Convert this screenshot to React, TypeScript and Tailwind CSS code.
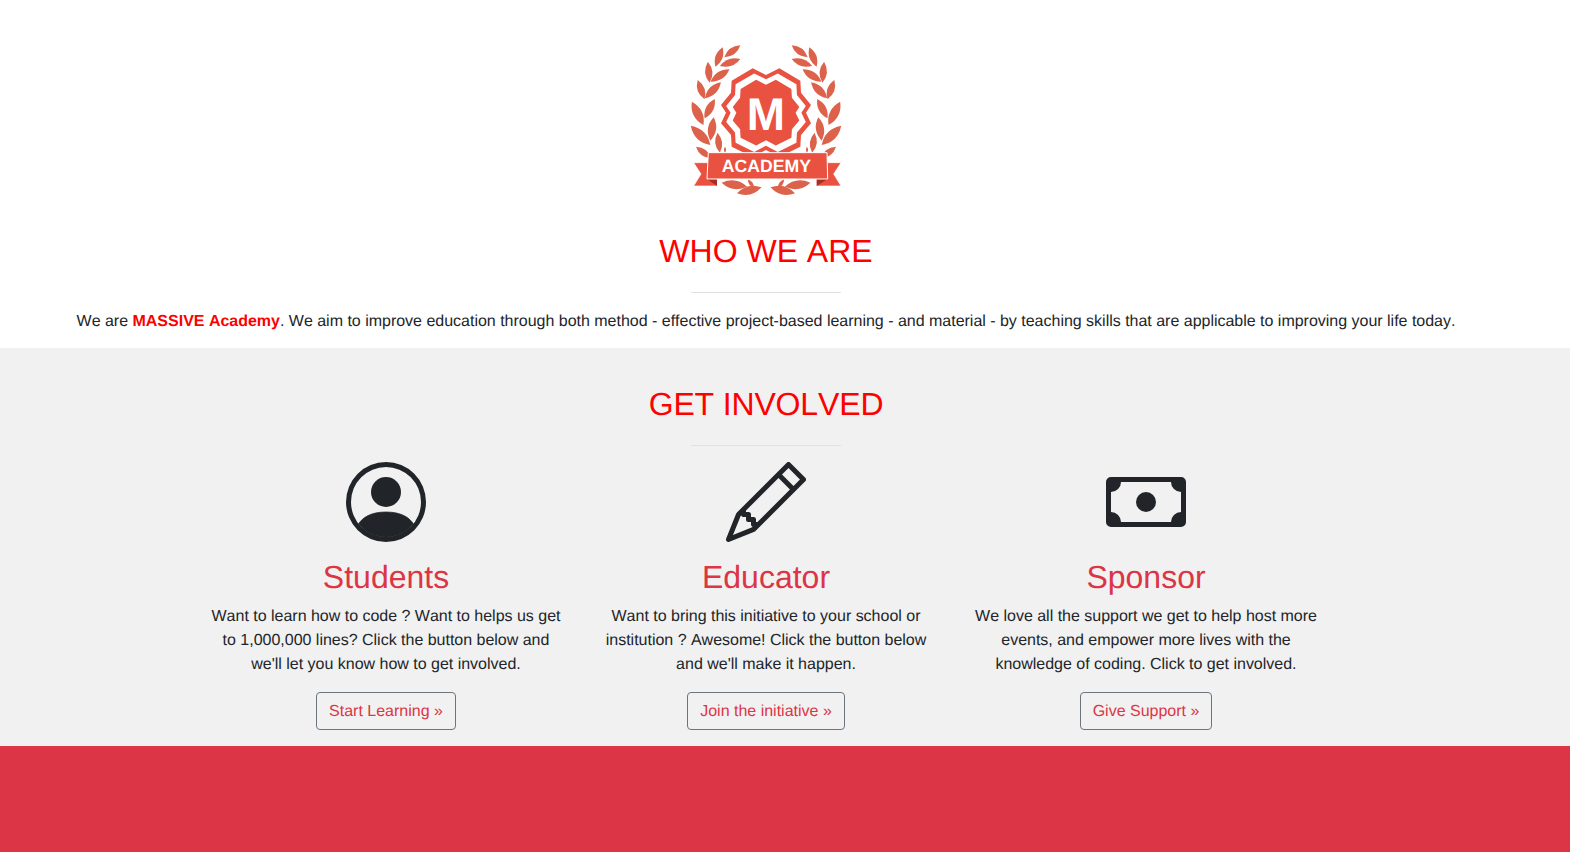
import React from "react";

const leaves = [
  [210, 46, 163, 82], [158, 52, 137, 110], [210, 87, 150, 108],
  [115, 95, 120, 158], [178, 118, 123, 155], [85, 150, 105, 208],
  [153, 157, 106, 205], [68, 215, 102, 285], [135, 207, 105, 265],
  [65, 287, 122, 345], [132, 262, 122, 332], [80, 350, 125, 385],
  [143, 308, 150, 368], [165, 350, 165, 368],
  [155, 458, 230, 470], [200, 490, 272, 472], [232, 448, 250, 474],
];

function leafPath([x1, y1, x2, y2]: number[]) {
  const mx = (x1 + x2) / 2;
  const my = (y1 + y2) / 2;
  const dx = (y2 - y1) * 0.34;
  const dy = (x1 - x2) * 0.34;
  return `M${x1} ${y1}Q${mx + dx} ${my + dy} ${x2} ${y2}Q${mx - dx} ${my - dy} ${x1} ${y1}Z`;
}

const badge =
  "M285 135L245 115L182 152L180 188L150 225L165 248L150 280L180 315L182 350L245 381L285 360L325 381L388 350L390 315L420 280L405 248L420 225L390 188L388 152L325 115Z";

function Logo() {
  return (
    <svg viewBox="0 0 570 540" className="block w-[190px] h-[180px]">
      <g fill="#dc624b" transform="translate(285 0) scale(1.025 1) translate(-285 0)">
        {leaves.map((l, i) => (
          <path key={i} d={leafPath(l)} />
        ))}
        <g transform="matrix(-1 0 0 1 570 0)">
          {leaves.map((l, i) => (
            <path key={i} d={leafPath(l)} />
          ))}
        </g>
      </g>
      <path d={badge} fill="#e95140" />
      <path d={badge} fill="#ffffff" transform="translate(285 248) scale(.885) translate(-285 -248)" />
      <path d={badge} fill="#e95140" transform="translate(285 248) scale(.74) translate(-285 -248)" />
      <text x="285" y="299" textAnchor="middle" fill="#fff" fontSize="138" fontWeight="700" fontFamily="'Liberation Sans', sans-serif">
        M
      </text>
      <path d="M68 398H138V468H68L90 432Z" fill="#e95140" stroke="#fff" strokeWidth="2" />
      <path d="M510 398H437V468H510L488 432Z" fill="#e95140" stroke="#fff" strokeWidth="2" />
      <path d="M108 447H138V468Z" fill="#a92e22" />
      <path d="M470 447H437V468Z" fill="#a92e22" />
      <path d="M112 368L468 368L470 447L108 447Z" fill="#e95140" stroke="#fff" strokeWidth="3" />
      <text x="286" y="425" textAnchor="middle" fill="#fff" fontSize="53" fontWeight="700" fontFamily="'Liberation Sans', sans-serif">
        ACADEMY
      </text>
    </svg>
  );
}

function PersonIcon() {
  return (
    <svg viewBox="0 0 16 16" fill="#212529" className="block w-20 h-20">
      <path stroke="#212529" strokeWidth=".15" d="M13.468 12.37C12.758 11.226 11.195 10 8 10s-4.757 1.225-5.468 2.37A6.987 6.987 0 0 0 8 15a6.987 6.987 0 0 0 5.468-2.63z" />
      <path fillRule="evenodd" d="M8 9a3 3 0 1 0 0-6 3 3 0 0 0 0 6z" />
      <path fillRule="evenodd" d="M8 1a7 7 0 1 0 0 14A7 7 0 0 0 8 1zM0 8a8 8 0 1 1 16 0A8 8 0 0 1 0 8z" />
    </svg>
  );
}

function PencilIcon() {
  return (
    <svg viewBox="0 0 16 16" fill="#212529" className="block w-20 h-20">
      <path d="M12.146.146a.5.5 0 0 1 .708 0l3 3a.5.5 0 0 1 0 .708l-10 10a.5.5 0 0 1-.168.11l-5 2a.5.5 0 0 1-.65-.65l2-5a.5.5 0 0 1 .11-.168l10-10zM11.207 2.5 13.5 4.793 14.793 3.5 12.5 1.207 11.207 2.5zm1.586 3L10.5 3.207 4 9.707V10h.5a.5.5 0 0 1 .5.5v.5h.5a.5.5 0 0 1 .5.5v.5h.293l6.5-6.5zm-9.761 5.175-.106.106-1.528 3.821 3.821-1.528.106-.106A.5.5 0 0 1 5 12.5V12h-.5a.5.5 0 0 1-.5-.5V11h-.5a.5.5 0 0 1-.468-.325z" />
    </svg>
  );
}

function CashIcon() {
  return (
    <svg viewBox="0 0 16 16" fill="#212529" className="block w-20 h-20">
      <path d="M8 10a2 2 0 1 0 0-4 2 2 0 0 0 0 4z" />
      <path d="M0 4a1 1 0 0 1 1-1h14a1 1 0 0 1 1 1v8a1 1 0 0 1-1 1H1a1 1 0 0 1-1-1V4zm3 0a2 2 0 0 1-2 2v4a2 2 0 0 1 2 2h10a2 2 0 0 1 2-2V6a2 2 0 0 1-2-2H3z" />
    </svg>
  );
}

const cards = [
  {
    icon: <PersonIcon />,
    title: "Students",
    text: "Want to learn how to code ? Want to helps us get to 1,000,000 lines? Click the button below and we'll let you know how to get involved.",
    cta: "Start Learning »",
  },
  {
    icon: <PencilIcon />,
    title: "Educator",
    text: "Want to bring this initiative to your school or institution ? Awesome! Click the button below and we'll make it happen.",
    cta: "Join the initiative »",
  },
  {
    icon: <CashIcon />,
    title: "Sponsor",
    text: "We love all the support we get to help host more events, and empower more lives with the knowledge of coding. Click to get involved.",
    cta: "Give Support »",
  },
];

function Divider() {
  return <hr className="w-[150px] border-0 border-t border-t-[#e1e1e1] mx-auto" />;
}

export default function App() {
  return (
    <div className="min-h-screen flex flex-col bg-white text-[#212529] text-base leading-6 [text-rendering:geometricPrecision] [font-kerning:none] font-['Liberation_Sans',Arial,sans-serif]">
      <section className="pr-[38px] pt-[30px] pb-[14px] flex flex-col items-center">
        <Logo />
        <h2 className="mt-[22px] text-[32px] leading-[38.4px] text-[#ff0000]">WHO WE ARE</h2>
        <div className="w-full mt-[22px] mb-4">
          <Divider />
        </div>
        <p className="text-center pt-px tracking-[-0.012px]">
          We are <strong className="font-bold text-[#ff0000]">MASSIVE Academy</strong>. We aim to improve education
          through both method - effective project-based learning - and material - by teaching skills that are
          applicable to improving your life today.
        </p>
      </section>

      <section className="bg-[#f1f1f1] pr-[38px] pt-[37px] pb-4">
        <h2 className="text-center text-[32px] leading-[38.4px] tracking-[-0.15px] text-[#ff0000]">GET INVOLVED</h2>
        <div className="mt-[21px] mb-4">
          <Divider />
        </div>
        <div className="flex justify-center">
          {cards.map((c) => (
            <div key={c.title} className="w-[380px] px-[15px] flex flex-col items-center text-center">
              {c.icon}
              <h2 className="mt-4 mb-2 text-[32px] leading-[38.4px] text-[#dc3545]">{c.title}</h2>
              <p className="pt-px mb-[15px] tracking-[-0.012px]">{c.text}</p>
              <a href="#" className="block px-3 pt-[7px] pb-[5px] border border-[#6c757d] rounded text-[#dc3545]">
                {c.cta}
              </a>
            </div>
          ))}
        </div>
      </section>

      <footer className="flex-1 bg-[#dc3545]" />
    </div>
  );
}
